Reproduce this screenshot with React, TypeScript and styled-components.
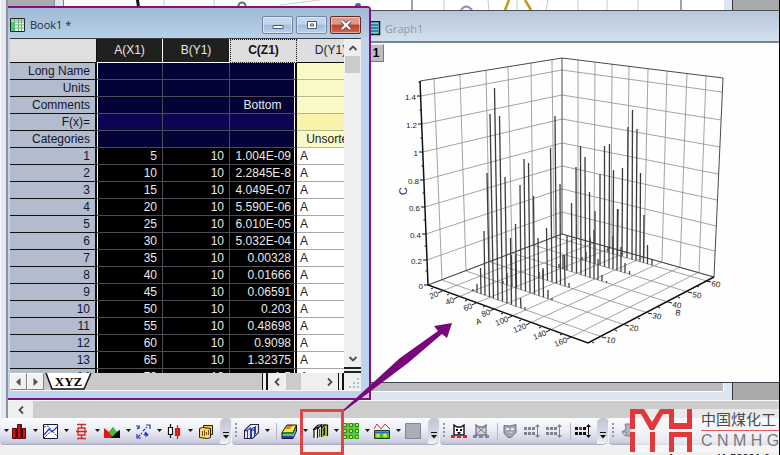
import React from "react";
import styled, { createGlobalStyle, css } from "styled-components";

const Global = createGlobalStyle`
  * { box-sizing: border-box; }
  html, body, #root { height: 100%; margin: 0; }
  body { overflow: hidden; font-family: "Liberation Sans", Arial, sans-serif; font-size: 12px; }
  button { margin: 0; padding: 0; border: 0; background: none; font: inherit; }
`;

const PURPLE = "#850f80";

const Shell = styled.main`
  position: relative;
  display: flex;
  flex-direction: column;
  height: 100vh;
  overflow: hidden;
  background: #f0f1f3;
  border-right: 1px solid #050505;
`;

const Upper = styled.div`
  flex: 1;
  display: flex;
  min-height: 0;
`;

const Dock = styled.div`
  width: 8px;
  background: #e3e7f3;
  border-left: 1px solid #f6f7fb;
  border-right: 2px solid #8e9097;
`;

const Work = styled.div`
  flex: 1;
  display: flex;
  flex-direction: column;
  min-width: 0;
`;

const Desktop = styled.div`
  position: relative;
  flex: 1;
  overflow: hidden;
  background: #a9aaac;
  border-bottom: 1px solid #fafafa;
`;

const BackWindow = styled.section`
  position: absolute;
  inset: 0 46px 0 46px;
  padding: 0 8px 8px;
  background: #dce6f0;
  border-left: 1px solid #8c8f96;
  border-right: 1px solid #33363c;
`;

const BackPage = styled.div`
  height: 100%;
  background: #bcbcbc;
  border-left: 1px solid #7c8088;
  border-right: 1px solid #fff;
  border-bottom: 1px solid #fff;
  svg { display: block; }
`;

const GraphWindow = styled.section`
  position: absolute;
  left: 356px;
  right: 0;
  top: 10px;
  bottom: 17px;
  display: flex;
  flex-direction: column;
  background: #fefefe;
  border-top: 1px solid #4a4f58;
  border-bottom: 1px solid #3b4350;
`;

const GraphTitle = styled.header`
  display: flex;
  align-items: center;
  gap: 4px;
  height: 32px;
  padding: 4px 0 0 3px;
  border-bottom: 2px solid #7b838e;
  background: linear-gradient(#b7c6d8, #d3e0ee);
  color: #8d99a8;
  font: 11px "Open Sans", sans-serif;
`;

const GraphBody = styled.div`
  position: relative;
  flex: 1;
  min-height: 0;
  > svg { display: block; width: 100%; height: 100%; }
`;

const LayerButton = styled.button`
  position: absolute;
  left: 4px;
  top: 1px;
  width: 16px;
  height: 18px;
  background: #bdbdbd;
  border: 1px solid #e8e8e8;
  border-right-color: #777;
  border-bottom-color: #777;
  font-size: 12px;
  font-weight: bold;
`;

const BookWindow = styled.section`
  position: absolute;
  left: 0;
  top: 6px;
  width: 363px;
  bottom: 0;
  display: flex;
  flex-direction: column;
  padding: 0 8px 7px 2px;
  background: #bed4ea;
  border: 2px solid ${PURPLE};
  border-left: 0;
  border-top-right-radius: 4px;
`;

const BookTitle = styled.header`
  display: flex;
  align-items: center;
  gap: 4px;
  height: 30px;
  margin: 0 -8px 0 -2px;
  padding: 3px 8px 0 2px;
  background: linear-gradient(#9fb8d4, #b9d0e8);
  h1 {
    flex: 1;
    margin: 0;
    color: #1f2a3c;
    font: 11px "Open Sans", sans-serif;
  }
`;

const Controls = styled.div`
  display: flex;
  gap: 3px;
`;

const ControlButton = styled.button<{ $close?: boolean }>`
  display: grid;
  place-items: center;
  width: 31px;
  height: 18px;
  border: 1px solid ${(p) => (p.$close ? "#6d2523" : "#6f86a6")};
  border-radius: 2px;
  box-shadow: inset 0 0 0 1px rgba(255, 255, 255, 0.45);
  background: ${(p) =>
    p.$close
      ? "linear-gradient(#dc9a8c 45%, #be3d2b 50%, #cf6a50)"
      : "linear-gradient(#c3d6ec 45%, #a3bcda 50%, #b9d2ec)"};
`;

const SheetArea = styled.div`
  flex: 1;
  display: flex;
  min-height: 0;
  border-top: 1px solid #3a3f46;
`;

const SheetClip = styled.div`
  flex: 1;
  min-width: 0;
  overflow: hidden;
  background: #fff;
`;

const Sheet = styled.table`
  width: 354px;
  table-layout: fixed;
  border-collapse: separate;
  border-spacing: 0;
  font-size: 12px;
  line-height: 16px;
`;

const Corner = styled.td`
  height: 24px;
  padding: 0;
  background: #dfdfe1;
  border-bottom: 1px solid #111;
  border-right: 1px solid #111;
`;

const ColHead = styled.th<{ $kind: "sel" | "focus" | "plain" }>`
  height: 24px;
  padding: 0 0 2px;
  font-weight: normal;
  text-align: center;
  ${(p) =>
    p.$kind === "sel" &&
    css`
      background: #20201e;
      color: #e8e8e8;
      border-right: 1px solid #fff;
      border-bottom: 1px solid #fff;
    `}
  ${(p) =>
    p.$kind === "focus" &&
    css`
      background: #dededf;
      color: #111;
      font-weight: bold;
      border: 1px dotted #111;
    `}
  ${(p) =>
    p.$kind === "plain" &&
    css`
      background: #dededf;
      color: #222;
      border-bottom: 1px solid #111;
    `}
`;

const RowHead = styled.th`
  height: 17px;
  padding: 0 5px 0 0;
  background: #b3bccd;
  color: #14152e;
  font-weight: normal;
  text-align: right;
  border-bottom: 1px solid #111;
  border-right: 2px solid #111;
`;

type CellKind = "label" | "formula" | "value";
const selBg = { label: "#040338", formula: "#0c0552", value: "#000" };
const yellowBg = { label: "#fafac8", formula: "#f7f3ab", value: "#fff" };

const SelCell = styled.td<{ $kind: CellKind; $first?: boolean; $last?: boolean }>`
  height: 17px;
  padding: 0 5px 0 0;
  overflow: hidden;
  white-space: nowrap;
  background: ${(p) => selBg[p.$kind]};
  color: #e9e9ea;
  text-align: ${(p) => (p.$kind === "value" ? "right" : "center")};
  border-bottom: 1px solid #4c4c56;
  border-right: ${(p) => (p.$last ? "2px solid #0a0a0a" : "1px solid #4c4c56")};
  ${(p) => p.$first && "box-shadow: inset 1px 0 #fff;"}
  ${(p) => p.$last && "box-shadow: inset -1px 0 #fff;"}
  ${(p) => p.$last && (p.$kind === "value" ? "padding-right: 4px;" : "padding: 0;")}
`;

const OpenCell = styled.td<{ $kind: CellKind }>`
  height: 17px;
  padding: ${(p) => (p.$kind === "value" ? "0 0 0 3px" : "0")};
  background: ${(p) => yellowBg[p.$kind]};
  color: #222;
  text-align: ${(p) => (p.$kind === "value" ? "left" : "center")};
  border-bottom: 1px solid ${(p) => (p.$kind === "value" ? "#a4a8a4" : "#b9b98e")};
`;

const VScroll = styled.div`
  width: 17px;
  display: flex;
  flex-direction: column;
  background: #efeff0;
  border-bottom: 6px double #222;
`;

const ScrollButton = styled.button<{ $w?: number }>`
  display: grid;
  place-items: center;
  width: ${(p) => p.$w ?? 17}px;
  height: 17px;
  flex: none;
  color: #555;
  background: #efeff0;
`;

const Thumb = styled.div`
  width: 15px;
  height: 17px;
  margin: 0 1px;
  background: #cbcbcb;
`;

const Grow = styled.div`
  flex: 1;
`;

const TabBar = styled.div`
  display: flex;
  align-items: stretch;
  height: 18px;
  background: #c9c9ca;
  border-bottom: 1px solid #fafafa;
`;

const NavButton = styled.button`
  display: grid;
  place-items: center;
  width: 17px;
  background: #f1f1f1;
  border: 1px solid #808080;
  border-top-color: #fff;
  border-left-color: #fff;
`;

const SheetTab = styled.button`
  display: grid;
  place-items: center;
  width: 49px;
  color: #000;
  font: bold 13px "Liberation Serif", serif;
  > * { grid-area: 1 / 1; }
`;

const Splitter = styled.div`
  width: 6px;
  background: #eee;
  border-left: 1px solid #111;
  border-right: 2px solid #111;
`;

const HScroll = styled.div`
  display: flex;
  width: 70px;
  background: #efeff0;
`;

const Grip = styled.div`
  display: grid;
  place-items: end;
  width: 17px;
  background: #eeeff0;
`;

const DeskScroll = styled.div`
  display: flex;
  height: 17px;
  background: #cdcdce;
`;

const ToolRow = styled.div`
  display: flex;
  height: 28px;
  background: #f2f3f6;
`;

const ToolBar = styled.div<{ $grow?: boolean }>`
  display: flex;
  align-items: center;
  height: 27px;
  margin-right: 1px;
  padding-left: 3px;
  ${(p) => p.$grow && "flex: 1;"}
  border-bottom: 1px solid #a9abc0;
  border-radius: 4px 3px 6px 4px;
  background: linear-gradient(#fbfbfd, #eceef6 45%, #cfd0e0 90%, #bcbdd1);
`;

const ToolButton = styled.button<{ $w: number }>`
  display: flex;
  align-items: center;
  gap: 4px;
  width: ${(p) => p.$w}px;
  height: 22px;
  flex: none;
`;

const Divider = styled.span`
  width: 1px;
  height: 17px;
  margin: 0 4px 0 2px;
  flex: none;
  background: #b4b6c8;
`;

const GripDots = styled.span`
  width: 2px;
  height: 16px;
  margin: 0 6px 0 0;
  flex: none;
  background: repeating-linear-gradient(#9495aa 0 2px, transparent 2px 4px);
`;

const MoreButton = styled.button`
  display: flex;
  align-items: flex-end;
  justify-content: center;
  width: 11px;
  height: 26px;
  padding-bottom: 5px;
  flex: none;
  border-radius: 5px 3px 6px 0;
  background: linear-gradient(#c3c4d4, #d9dae6 70%, #f6f6fa);
`;

const Status = styled.footer`
  display: flex;
  justify-content: flex-end;
  gap: 40px;
  height: 9px;
  padding: 6px 9px 0 0;
  overflow: hidden;
  background: #f0f0f1;
  font-size: 11px;
  line-height: 12px;
`;

const Callout = styled.svg`
  position: absolute;
  left: 0;
  top: 0;
  pointer-events: none;
`;

const Brand = styled.aside`
  position: absolute;
  right: 0;
  bottom: 3px;
  display: flex;
  gap: 8px;
  height: 43px;
  background: rgba(250, 250, 252, 0.62);
`;

const BrandText = styled.div`
  display: flex;
  flex-direction: column;
  width: 78px;
  white-space: nowrap;
  strong {
    height: 22px;
    border-bottom: 1px solid #dc5a58;
    color: #4a4a4c;
    font: 15px/20px "Noto Sans CJK SC", sans-serif;
  }
  span {
    color: #77787c;
    font-size: 16px;
    line-height: 20px;
  }
`;

const Chevron = ({ dir }: { dir: "up" | "down" | "left" | "right" }) => {
  const d = {
    up: "M1.5 7 5 3.5 8.5 7",
    down: "M1.5 3 5 6.5 8.5 3",
    left: "M7 1.5 3.5 5 7 8.5",
    right: "M3 1.5 6.5 5 3 8.5",
  }[dir];
  return (
    <svg width="10" height="10" aria-hidden="true">
      <path d={d} fill="none" stroke="#4e4e50" strokeWidth="1.8" />
    </svg>
  );
};

const Caret = () => (
  <svg width="7" height="4" aria-hidden="true">
    <path d="M1 0h5L3.5 3z" fill="#111" />
  </svg>
);

const More = () => (
  <MoreButton aria-label="More buttons">
    <svg width="6" height="7" aria-hidden="true">
      <path d="M0 .5h6" stroke="#111" />
      <path d="M0 3h6L3 6.500z" fill="#111" />
    </svg>
  </MoreButton>
);

const icons: Record<string, React.ReactNode> = {
  columns: (
    <g stroke="#4c0808" fill="#cf1717">
      <path d="M1.500 5.500h4v10h-4zM6.500 1.500h4v14h-4zM11.500 5.500h3v10h-3z" />
      <path d="M4.500 6v9M9.500 2v13" stroke="#7d0a0a" />
    </g>
  ),
  lines: (
    <g fill="none">
      <path d="M1.500 1.500h14v14h-14z" fill="#fff" stroke="#16163a" />
      <path d="M2 12 7 6l3 3 5-5" stroke="#2238c4" strokeWidth="1.200" />
      <path d="m2 4 4-1 9 10M2 15l6-6" stroke="#28306a" strokeDasharray="2 1" />
    </g>
  ),
  box: (
    <g fill="none" stroke="#d22828" strokeWidth="1.300">
      <path d="M4 1.500h9M4 15.500h9M8.500 2v3M8.500 12v3" />
      <path d="M5 5h7v2.500l-1 1 1 1V12H5V9.500l1-1-1-1zM3 8.500h11" />
    </g>
  ),
  area: (
    <g>
      <path d="M0 15V5l5 4 4-5 3 5 4-2v8z" fill="#e01a1a" />
      <path d="m5 10 4-6 4 5-4 5z" fill="#39c04b" />
      <path d="m7 15 5-5 4-3v8z" fill="#0c0c0c" />
    </g>
  ),
  vectors: (
    <g fill="none" stroke="#2032bb" strokeWidth="1.200">
      <path d="m2 6 3-3m3 5 4-4M3 14l4-4M10 9l3 4" strokeDasharray="3 1" />
      <path d="M1 3h3v3M11 2h4v4M2 11v4h4M11 14v-4m-2 2 2-2 2 2" />
    </g>
  ),
  candle: (
    <g strokeWidth="1.200">
      <path d="M4.500 1v14" stroke="#111" />
      <path d="M2.500 4.500h4v7h-4z" fill="#fff" stroke="#111" />
      <path d="M11.500 2v14" stroke="#d41919" />
      <path d="M9.500 5.500h4v7h-4z" fill="#e02222" stroke="#d41919" />
    </g>
  ),
  template: (
    <g stroke="#2d2206">
      <path d="M6.500 2.500h9v9h-9z" fill="#f5c93a" />
      <path d="m2.500 5.500 3-1 8 1v9l-3 1-8-1z" fill="#f3df6a" />
      <path d="M5.500 8v5M7.500 7v6M9.500 9v3M11.500 7v5" stroke="#7a4c0b" />
    </g>
  ),
  bars3d: (
    <g stroke="#23233e" strokeWidth="1.100">
      <path d="M1.500 7.500 7.500 1.500h8v8l-6 6h-8z" fill="#eef0f8" />
      <path d="M4.500 15V7l3-2v10M8.500 15V6l3-2v9M12.500 11V3" fill="none" stroke="#2f3bb5" />
      <path d="m1.500 7.500 3 .5M8 7h4" fill="none" />
    </g>
  ),
  surface: (
    <g>
      <path d="M1 9 6 2h9l-3 8z" fill="#f7ea33" />
      <path d="m4 6 3-4h5l-3 4z" fill="#ef7c20" />
      <path d="M9 6h5l-2 4H6z" fill="#f7ea33" />
      <path d="M1 9h11l3-7v6l-4 7H1z" fill="#3fb5e0" />
      <path d="M1 9h11l1-2v2l-2 3H1z" fill="#6fd64a" />
      <path d="M1 13h11v2H1z" fill="#2a3bc2" />
      <path d="M1 9.500 6 2h9.500v6L12 15.500H1zM1 10h11l3-7" fill="none" stroke="#15152a" />
    </g>
  ),
  waterfall: (
    <g stroke="#111" strokeWidth="1.200">
      <path d="M2 15V7l4-3v10" fill="#fff" />
      <path d="M5.500 15V6l4-4v12" fill="#fff" />
      <path d="M9.500 14V5l3-3h3v11" fill="#b6c92e" />
      <path d="M12.500 12V4M1 7l5-5h8" fill="none" />
      <path d="M7.500 14V6M11.500 13V5" stroke="#3c6c14" />
    </g>
  ),
  contour: (
    <g>
      <path d="M0 0h16v16H0z" fill="#2fc62f" />
      {[2, 8, 14].map((x) =>
        [2, 8, 14].map((y) => (
          <circle key={`${x}-${y}`} cx={x} cy={y} r="1.700" fill="#e3da2e" stroke="#176b2a" strokeWidth=".800" />
        ))
      )}
      <path d="M5 5h1v1H5zM10 5h1v1h-1zM5 11h1v1H5zM10 11h1v1h-1z" fill="#e54720" />
      <path d="M0 5h16M0 11h16M5 0v16M11 0v16" stroke="#8ae25a" strokeWidth=".600" />
    </g>
  ),
  profile: (
    <g>
      <path d="m0 6 3-5 4 5 4-5 5 5" fill="none" stroke="#d63b3b" />
      <path d="M.5 7.500h15v8H.5z" fill="#31c437" stroke="#14401a" />
      <circle cx="4" cy="12.500" r="2" fill="#e8dc34" />
      <circle cx="11" cy="12.500" r="2" fill="#e8dc34" />
      <path d="M1 9.500h14" stroke="#2b62cf" />
    </g>
  ),
  blank: <path d="M.5.500h15v15H.5z" fill="#a9acba" stroke="#82869a" />,
  mask: (
    <g>
      <path d="M3 12V2l3 2h4l3-2v10z" fill="#fff" stroke="#111" strokeWidth="1.400" />
      <path d="M5 6h2v2H5zM9 6h2v2H9zM6 9h4l-2 3z" fill="#111" />
      <path d="M0 12h4v3H0zM6 12h4v3H6zM12 12h4v3h-4z" fill="#d82323" />
    </g>
  ),
  unmask: (
    <g>
      <path d="M3 12V2l3 2h4l3-2v10z" fill="#d6d8e2" stroke="#777a88" strokeWidth="1.300" />
      <path d="m2 2 12 10M14 2 2 12" stroke="#777a88" />
      <path d="M0 12h4v3H0zM6 12h4v3H6zM12 12h4v3h-4z" fill="#828596" />
    </g>
  ),
  shield: (
    <g>
      <path d="M2 2.500 8 3l6-1.500v8L9 14.500H6L2 10z" fill="#a4a7b6" stroke="#6f7284" />
      <path d="M4 5h3v2H4zM9 5h3v2H9zM6 10l4-1v1z" fill="#e8e9f1" />
    </g>
  ),
  dotsGray: (
    <g fill="#7f8292">
      <path d="M0 4h3v3H0zM4 4h3v3H4zM8 4h3v3H8zM0 9h3v3H0zM4 9h3v3H4zM8 9h3v3H8z" />
      <path d="M13 3h1v10h-1z" />
      <path d="m11 4 2.500-3L16 4zM11 12l2.500 3 2.500-3z" />
    </g>
  ),
  dotsBlack: (
    <g fill="#111">
      <path d="M0 4h3v3H0zM8 4h3v3H8zM0 9h3v3H0zM4 9h3v3H4zM8 9h3v3H8z" />
      <path d="M4 4h3v3H4z" fill="#c22" />
      <path d="M13 3h1v10h-1z" />
      <path d="m11 4 2.500-3L16 4zM11 12l2.500 3 2.500-3z" />
    </g>
  ),
  hook: (
    <path d="M5 1h6v12H6V9H2l4-3zM2 9l3 4" fill="#aeb0bf" stroke="#7c7f90" />
  ),
};

const Icon = ({ name }: { name: string }) => (
  <svg width="17" height="17" viewBox="0 0 17 17" aria-hidden="true">
    {icons[name]}
  </svg>
);

const Tool = ({ name, label, w = 31, caret = true }: { name: string; label: string; w?: number; caret?: boolean }) => (
  <ToolButton $w={w} aria-label={label}>
    <Icon name={name} />
    {caret && <Caret />}
  </ToolButton>
);

const BookIcon = () => (
  <svg width="16" height="16" aria-hidden="true">
    <path d="M.5 1.500h14v13H.5z" fill="#f4fff4" stroke="#1c2c1c" />
    <path d="M1 2h13v2H1z" fill="#e5b5c4" />
    <path d="M1 5h3v9H1z" fill="#46cc7c" />
    <path d="M4.500 2v12M8.500 2v12M11.500 2v12M1 5h13M1 8h13M1 11h13" stroke="#56bd76" />
  </svg>
);

const GraphIcon = () => (
  <svg width="14" height="15" aria-hidden="true">
    <path d="M.5.500h12v13H.5z" fill="#5fd5e6" stroke="#111" strokeWidth="1.500" />
    <path d="M2 4h9M2 7h9M2 10h9" stroke="#1a2f56" />
  </svg>
);

const labels: [string, string, string, CellKind][] = [
  ["Long Name", "", "", "label"],
  ["Units", "", "", "label"],
  ["Comments", "Bottom", "", "label"],
  ["F(x)=", "", "", "formula"],
  ["Categories", "", "Unsorted", "label"],
];

const zValues = [
  "1.004E-09", "2.2845E-8", "4.049E-07", "5.590E-06", "6.010E-05", "5.032E-04", "0.00328",
  "0.01666", "0.06591", "0.203", "0.48698", "0.9098", "1.32375", "1.5",
];

/* C axis levels: label, left x, left y, y at the back edge, right x, right y. */
const zLevels: [string, number, number, number, number, number][] = [
  ["1.4", 421, 96, 70, 722, 92],
  ["1.2", 422, 124, 95, 721, 120],
  ["1", 423, 152, 119, 720, 147],
  ["0.8", 424, 180, 143, 718, 174],
  ["0.6", 425, 207, 166, 717, 200],
  ["0.4", 426, 234, 189, 716, 226],
  ["0.2", 427, 260, 212, 715, 251],
  ["0", 428, 285, 234, 714, 277],
];

/* Wall and floor lines: label, wall top, wall foot, far end on the floor. */
const bLines: [string, number, number, number, number, number, number][] = [
  ["10", 434, 79, 442, 280, 602, 337],
  ["20", 460, 75, 466, 271, 625, 325],
  ["30", 486, 71, 490, 262, 648, 313],
  ["40", 508, 67, 512, 253, 668, 302],
  ["50", 531, 63, 533, 245, 688, 292],
  ["60", 552, 60, 554, 237, 707, 281],
];

const aLines: [string, number, number, number, number, number, number][] = [
  ["20", 578, 60, 578, 238, 442, 291],
  ["40", 595, 62, 594, 243, 458, 297],
  ["60", 612, 64, 611, 248, 476, 303],
  ["80", 629, 66, 627, 252, 494, 309],
  ["100", 648, 69, 644, 257, 512, 316],
  ["120", 667, 71, 662, 262, 530, 323],
  ["140", 687, 73, 680, 267, 550, 330],
  ["160", 706, 76, 699, 272, 571, 337],
];

/* Drop lines per B series: [bottom x, top x, top y]. */
const series: [number, number, number][][] = [
  [[473, 473, 289], [477, 477, 284], [481, 480.5, 268], [485, 484, 231], [489.5, 487, 173], [493.5, 490, 114], [498, 494.5, 88], [502.5, 499.5, 116], [507, 505, 177], [511.5, 510.5, 238], [516, 515.5, 255], [521, 520.5, 298], [525, 525, 307]],
  [[503, 503, 281], [507, 507, 273], [512, 511.5, 255], [516.5, 515.5, 224], [521, 520, 185], [525.5, 524, 159], [530, 528.5, 163], [534.5, 533.5, 196], [539, 538, 238], [543.5, 543, 268], [548, 548, 290], [552, 552, 298]],
  [[539, 539, 272], [543, 543, 270], [547.5, 546.5, 228], [552, 550.5, 148], [556.5, 555, 116], [560.5, 560, 184], [565, 564.5, 255], [569, 569, 283]],
  [[559, 559, 264], [563, 563, 255], [567, 567, 236], [572, 571.5, 203], [576.5, 576, 167], [581, 580.5, 146], [585.5, 585, 157], [590, 589.5, 192], [594, 594, 230], [598, 598, 259], [602, 602, 275], [606.5, 606.5, 281]],
  [[582, 582, 257], [586, 586, 252], [590, 590, 238], [595, 595, 211], [600, 600, 174], [604.5, 604.5, 146], [609, 609.5, 144], [613, 613.5, 170], [617, 617.5, 209], [621, 621, 247], [625, 625, 263], [629.5, 629.5, 271]],
  [[608, 608, 247], [613, 613, 236], [617.5, 618, 209], [622, 622.5, 168], [627, 628, 127], [632, 632.5, 110], [636, 637, 129], [640, 640.5, 173], [643.5, 644, 215], [647.5, 647.5, 245], [652, 652, 259], [656.5, 656.5, 266]],
];

const baseY = (s: number, x: number) => {
  const [, , , x1, y1, x2, y2] = bLines[s];
  return y1 + ((x - x1) * (y2 - y1)) / (x2 - x1);
};

const Plot = () => (
  <svg viewBox="364 43 415 339" preserveAspectRatio="xMidYMid meet" role="img" aria-label="3D drop line graph">
    <g stroke="#8d8d8f" strokeWidth=".800" fill="none">
      {zLevels.map(([t, x, y, c, rx, ry]) => (
        <path key={t} d={`M${x} ${y}L562 ${c}L${rx} ${ry}`} />
      ))}
      {[...bLines, ...aLines].map(([t, a, b, c, d, e, f], i) => (
        <path key={i + t} d={`M${a} ${b}L${c} ${d}L${e} ${f}`} />
      ))}
    </g>
    <path d="M420 81 562 58 723 78M562 58V234M723 78 714 277M428 285 562 234 714 277" fill="none" stroke="#4a4a4c" />
    <path d="M420 81 428 285 588 343 714 277" fill="none" stroke="#111" strokeWidth="1.500" />
    <g stroke="#111">
      {zLevels.map(([t, x, y]) => (
        <path key={t} d={`M${x} ${y}h-4M${x - 0.5} ${y - 14}h-2`} />
      ))}
      {aLines.map(([t, , , , , x, y]) => (
        <path key={t} d={`M${x} ${y}l-4 2M${x - 9} ${y - 3}l-2 1`} />
      ))}
      {bLines.map(([t, , , , , x, y]) => (
        <path key={t} d={`M${x} ${y}l4 1M${x - 10} ${y + 5}l2 1`} />
      ))}
    </g>
    <g stroke="#3c3c3e" strokeWidth="1.300">
      {series.map((s, i) =>
        s.map(([b, x, y], k) => <path key={`${i}-${k}`} d={`M${x} ${y}L${b} ${baseY(i, b).toFixed(1)}`} />)
      )}
    </g>
    <g fill="#222" fontSize="8" fontFamily="Liberation Sans, Arial, sans-serif">
      {zLevels.map(([t, x, y]) => (
        <text key={t} x={x - 5} y={y + 4} textAnchor="end">{t}</text>
      ))}
      {aLines.map(([t, , , , , x, y]) => (
        <text key={t} textAnchor="end" transform={`translate(${x - 3} ${y + 5}) rotate(-22)`}>{t}</text>
      ))}
      {bLines.map(([t, , , , , x, y]) => (
        <text key={t} transform={`translate(${x + 4} ${y + 5}) rotate(10)`}>{t}</text>
      ))}
      <text transform="translate(477 325) rotate(-22)">A</text>
      <text transform="translate(675 315) rotate(10)">B</text>
      <text transform="translate(407 195) rotate(-92)" fontSize="11">C</text>
    </g>
  </svg>
);

const BackPlot = () => (
  <svg width="660" height="12" viewBox="64 0 660 12" aria-hidden="true">
    <path d="M64 0h660v12H64z" fill="#fff" />
    <path d="M136 0h3l1 7h-3z" fill="#111" />
    <path d="M164 0v10M214 0v10M444 0v10M488 0l1 10M517 0v10M548 0l-2 10M578 0v10M607 0v10M638 0v10M280 5l40-5" stroke="#c9c9ce" fill="none" />
    <path d="M412 0v10M681 0v10" stroke="#444" />
    <circle cx="242" cy="6" r="3.500" fill="none" stroke="#6a6a70" strokeWidth="2" />
    <circle cx="358" cy="6" r="3" fill="#3f62b8" />
    <path d="M461 10q5-7 11 0" fill="none" stroke="#a97cc9" strokeWidth="2" />
    <path d="m505 10 4-10M525 0l6 10" stroke="#c09a14" strokeWidth="2.500" />
  </svg>
);

const BrandMark = () => (
  <svg width="63" height="43" aria-hidden="true">
    <g fill="#e0393b">
      <path d="M0 0h14l8 13 8-13h14v14h13V0h5v20H39V5h-6l-9 16h-4L11 5H5v15H0z" />
      <path d="M0 23h5v20H0zM20 23h5v20h-5zM39 23h23v20h-5V28H44v15h-5z" />
    </g>
  </svg>
);

export default function App() {
  return (
    <Shell>
      <Global />
      <Upper>
        <Dock />
        <Work>
          <Desktop>
            <BackWindow aria-label="Graph window">
              <BackPage><BackPlot /></BackPage>
            </BackWindow>

            <GraphWindow aria-label="Graph1">
              <GraphTitle><GraphIcon />Graph1</GraphTitle>
              <GraphBody>
                <Plot />
                <LayerButton>1</LayerButton>
              </GraphBody>
            </GraphWindow>

            <BookWindow aria-label="Book1">
              <BookTitle>
                <BookIcon />
                <h1>Book1 *</h1>
                <Controls>
                  <ControlButton aria-label="Minimize">
                    <svg width="12" height="10"><path d="M1 5.500h10v3H1z" fill="#fff" stroke="#4c5a70" /></svg>
                  </ControlButton>
                  <ControlButton aria-label="Maximize">
                    <svg width="12" height="10"><path d="M1.500 1.500h9v7h-9zM4.500 4h3v2h-3z" fill="#fff" stroke="#4c5a70" /></svg>
                  </ControlButton>
                  <ControlButton $close aria-label="Close">
                    <svg width="12" height="10">
                      <path d="m2 1 8 8M10 1 2 9" stroke="#5d4446" strokeWidth="4" />
                      <path d="m2 1 8 8M10 1 2 9" stroke="#fff" strokeWidth="2.400" />
                    </svg>
                  </ControlButton>
                </Controls>
              </BookTitle>

              <SheetArea>
                <SheetClip>
                  <Sheet>
                    <colgroup>
                      <col width="87" /><col width="66" /><col width="67" /><col width="67" /><col width="67" />
                    </colgroup>
                    <thead>
                      <tr>
                        <Corner />
                        <ColHead scope="col" $kind="sel">A(X1)</ColHead>
                        <ColHead scope="col" $kind="sel">B(Y1)</ColHead>
                        <ColHead scope="col" $kind="focus">C(Z1)</ColHead>
                        <ColHead scope="col" $kind="plain">D(Y1)</ColHead>
                      </tr>
                    </thead>
                    <tbody>
                      {labels.map(([name, c, d, kind]) => (
                        <tr key={name}>
                          <RowHead scope="row">{name}</RowHead>
                          <SelCell $kind={kind} $first />
                          <SelCell $kind={kind} />
                          <SelCell $kind={kind} $last>{c}</SelCell>
                          <OpenCell $kind={kind}>{d}</OpenCell>
                        </tr>
                      ))}
                      {zValues.map((z, i) => (
                        <tr key={z}>
                          <RowHead scope="row">{i + 1}</RowHead>
                          <SelCell $kind="value" $first>{(i + 1) * 5}</SelCell>
                          <SelCell $kind="value">10</SelCell>
                          <SelCell $kind="value" $last>{z}</SelCell>
                          <OpenCell $kind="value">A</OpenCell>
                        </tr>
                      ))}
                    </tbody>
                  </Sheet>
                </SheetClip>
                <VScroll>
                  <ScrollButton aria-label="Scroll up"><Chevron dir="up" /></ScrollButton>
                  <Thumb />
                  <Grow />
                  <ScrollButton aria-label="Scroll down"><Chevron dir="down" /></ScrollButton>
                </VScroll>
              </SheetArea>
              <TabBar>
                <NavButton aria-label="Previous sheet"><svg width="5" height="8"><path d="M4.500 0v8L0 4z" fill="#555" /></svg></NavButton>
                <NavButton aria-label="Next sheet"><svg width="5" height="8"><path d="M.5 0v8L5 4z" fill="#555" /></svg></NavButton>
                <SheetTab>
                  <svg width="49" height="17" aria-hidden="true">
                    <path d="M2 0 8 16h32L47 0z" fill="#fff" />
                    <path d="M2 0 8 16h32L47 0" fill="none" stroke="#111" strokeWidth="1.500" />
                  </svg>
                  <span>XYZ</span>
                </SheetTab>
                <Grow />
                <Splitter />
                <HScroll>
                  <ScrollButton aria-label="Scroll left"><Chevron dir="left" /></ScrollButton>
                  <Thumb />
                  <Grow />
                  <ScrollButton aria-label="Scroll right"><Chevron dir="right" /></ScrollButton>
                </HScroll>
                <Splitter />
                <Grip>
                  <svg width="12" height="12" aria-hidden="true">
                    <path d="M8 0h2v2H8zM4 4h2v2H4zM8 4h2v2H8zM0 8h2v2H0zM4 8h2v2H4zM8 8h2v2H8z" fill="#b9bcc0" />
                  </svg>
                </Grip>
              </TabBar>
            </BookWindow>
          </Desktop>
          <DeskScroll>
            <ScrollButton $w={25} aria-label="Scroll workspace left"><Chevron dir="left" /></ScrollButton>
          </DeskScroll>
        </Work>
      </Upper>

      <ToolRow>
        <ToolBar role="toolbar" aria-label="2D graphs">
          <ToolButton $w={8} aria-label="More lines"><Caret /></ToolButton>
          <Tool name="columns" label="Column" />
          <Tool name="lines" label="Multi-curve" />
          <Tool name="box" label="Box" />
          <Tool name="area" label="Area" />
          <Tool name="vectors" label="Vector" />
          <Tool name="candle" label="Stock" />
          <Tool name="template" label="Template library" w={23} caret={false} />
          <More />
        </ToolBar>
        <ToolBar role="toolbar" aria-label="3D and contour graphs">
          <GripDots />
          <Tool name="bars3d" label="3D bars" />
          <Divider />
          <Tool name="surface" label="3D surface" />
          <Tool name="waterfall" label="3D waterfall" />
          <Tool name="contour" label="Contour" />
          <Tool name="profile" label="Profiles" />
          <Tool name="blank" label="Image plot" w={23} caret={false} />
          <More />
        </ToolBar>
        <ToolBar role="toolbar" aria-label="Mask">
          <GripDots />
          <Tool name="mask" label="Mask points" w={22} caret={false} />
          <Tool name="unmask" label="Unmask points" w={22} caret={false} />
          <Divider />
          <Tool name="shield" label="Change mask colour" w={22} caret={false} />
          <Tool name="dotsGray" label="Hide masked points" w={22} caret={false} />
          <Tool name="dotsGray" label="Swap mask" w={22} caret={false} />
          <Divider />
          <Tool name="dotsBlack" label="Enable masking" w={22} caret={false} />
          <More />
        </ToolBar>
        <ToolBar role="toolbar" aria-label="Object edit" $grow>
          <GripDots />
          <Tool name="hook" label="Align" w={22} caret={false} />
        </ToolBar>
      </ToolRow>
      <Status>
        <span>A</span>
        <span>41.53831 6</span>
      </Status>

      <Callout width="460" height="455" aria-hidden="true">
        <path d="M342 411 400 358 438 331 434 326 452 323 447 338 442 334 408 363 343 412z" fill="#78087a" />
        <path d="M301.500 410.500h41v43h-41z" fill="none" stroke="#e24444" strokeWidth="3" />
      </Callout>

      <Brand aria-label="中国煤化工 CNMHG">
        <BrandMark />
        <BrandText>
          <strong>中国煤化工</strong>
          <span>C N M H G</span>
        </BrandText>
      </Brand>
    </Shell>
  );
}
